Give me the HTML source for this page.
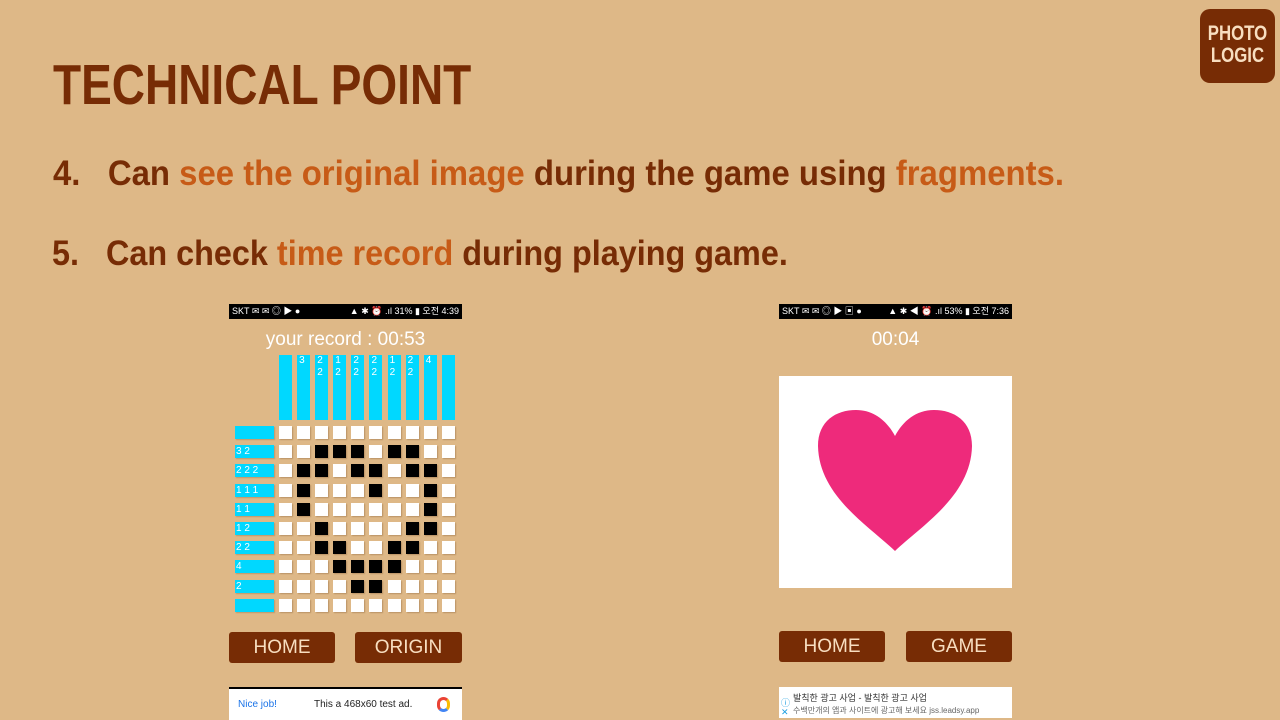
<!DOCTYPE html>
<html><head><meta charset="utf-8"><style>
*{margin:0;padding:0;box-sizing:border-box}
body{width:1280px;height:720px;background:#DEB887;position:relative;overflow:hidden;font-family:"Liberation Sans","Noto Sans CJK KR",sans-serif}
.abs{position:absolute}
.t{color:#772C05;font-weight:bold;white-space:nowrap;transform-origin:0 0}
.o{color:#C75B17}
.sb{background:#000;color:#fff;font-size:9px;height:15px;line-height:15px;padding:0 3px;display:flex;justify-content:space-between}
.btn{background:#772C05;color:#F8DEC0;font-size:19px;text-align:center;line-height:31px;height:31px;border-radius:3px}
.cell{width:13px;height:13px;background:#fff;box-shadow:1px 1px 1px rgba(120,80,40,.35)}
.cell.b{background:#000}
.grid{display:grid;grid-template-columns:repeat(10,13px);column-gap:5.1px;row-gap:6.2px}
.cb{width:13px;height:65px;background:#00D8FF;color:#fff;font-size:10px;line-height:12px;padding-left:2px}
.rc{width:39px;height:13px;background:#00D8FF;color:#fff;font-size:10px;line-height:13px;padding-left:1px;box-shadow:1px 1px 1px rgba(120,80,40,.3)}
</style></head><body>
<div class="abs" style="left:1200px;top:9px;width:75px;height:74px;background:#772C05;border-radius:10px;color:#F8DEC0;font-weight:bold;font-size:21px;line-height:22px;text-align:center;padding-top:14px"><div style="transform:scaleX(.8)">PHOTO<br>LOGIC</div></div>
<div class="abs t" style="left:53px;top:52px;font-size:57px;transform:scaleX(.807)">TECHNICAL POINT</div>
<div class="abs t" style="left:53px;top:154px;font-size:35px;transform:scaleX(.94)">4.&nbsp;&nbsp; Can <span class="o">see the original image</span> during the game using <span class="o">fragments.</span></div>
<div class="abs t" style="left:52px;top:234px;font-size:35px;transform:scaleX(.925)">5.&nbsp;&nbsp; Can check <span class="o">time record</span> during playing game.</div>

<div class="abs sb" style="left:229px;top:304px;width:233px"><span>SKT ✉ ✉ ◎ ▶ ●</span><span>▲ ✱ ⏰ .ıl 31% ▮ 오전 4:39</span></div>
<div class="abs" style="left:229px;top:329px;width:233px;text-align:center;color:#fff;font-size:19px">your record : 00:53</div>
<div class="abs" style="left:279px;top:355px;display:flex;gap:5.1px">
<div class="cb"></div><div class="cb">3</div><div class="cb">2<br>2</div><div class="cb">1<br>2</div><div class="cb">2<br>2</div><div class="cb">2<br>2</div><div class="cb">1<br>2</div><div class="cb">2<br>2</div><div class="cb">4</div><div class="cb"></div>
</div>
<div class="abs" style="left:235px;top:426px;display:flex;flex-direction:column;gap:6.2px">
<div class="rc"></div><div class="rc">3 2</div><div class="rc">2 2 2</div><div class="rc">1 1 1</div><div class="rc">1 1</div><div class="rc">1 2</div><div class="rc">2 2</div><div class="rc">4</div><div class="rc">2</div><div class="rc"></div>
</div>
<div class="abs grid" style="left:279px;top:426px">
<div class="cell"></div><div class="cell"></div><div class="cell"></div><div class="cell"></div><div class="cell"></div><div class="cell"></div><div class="cell"></div><div class="cell"></div><div class="cell"></div><div class="cell"></div>
<div class="cell"></div><div class="cell"></div><div class="cell b"></div><div class="cell b"></div><div class="cell b"></div><div class="cell"></div><div class="cell b"></div><div class="cell b"></div><div class="cell"></div><div class="cell"></div>
<div class="cell"></div><div class="cell b"></div><div class="cell b"></div><div class="cell"></div><div class="cell b"></div><div class="cell b"></div><div class="cell"></div><div class="cell b"></div><div class="cell b"></div><div class="cell"></div>
<div class="cell"></div><div class="cell b"></div><div class="cell"></div><div class="cell"></div><div class="cell"></div><div class="cell b"></div><div class="cell"></div><div class="cell"></div><div class="cell b"></div><div class="cell"></div>
<div class="cell"></div><div class="cell b"></div><div class="cell"></div><div class="cell"></div><div class="cell"></div><div class="cell"></div><div class="cell"></div><div class="cell"></div><div class="cell b"></div><div class="cell"></div>
<div class="cell"></div><div class="cell"></div><div class="cell b"></div><div class="cell"></div><div class="cell"></div><div class="cell"></div><div class="cell"></div><div class="cell b"></div><div class="cell b"></div><div class="cell"></div>
<div class="cell"></div><div class="cell"></div><div class="cell b"></div><div class="cell b"></div><div class="cell"></div><div class="cell"></div><div class="cell b"></div><div class="cell b"></div><div class="cell"></div><div class="cell"></div>
<div class="cell"></div><div class="cell"></div><div class="cell"></div><div class="cell b"></div><div class="cell b"></div><div class="cell b"></div><div class="cell b"></div><div class="cell"></div><div class="cell"></div><div class="cell"></div>
<div class="cell"></div><div class="cell"></div><div class="cell"></div><div class="cell"></div><div class="cell b"></div><div class="cell b"></div><div class="cell"></div><div class="cell"></div><div class="cell"></div><div class="cell"></div>
<div class="cell"></div><div class="cell"></div><div class="cell"></div><div class="cell"></div><div class="cell"></div><div class="cell"></div><div class="cell"></div><div class="cell"></div><div class="cell"></div><div class="cell"></div>
</div>
<div class="abs btn" style="left:229px;top:632px;width:106px">HOME</div>
<div class="abs btn" style="left:355px;top:632px;width:107px">ORIGIN</div>
<div class="abs" style="left:229px;top:687px;width:233px;height:33px;background:#fff;border-top:2px solid #000;font-size:10px;line-height:31px">
<span class="abs" style="left:9px;color:#1a73e8">Nice job!</span><span class="abs" style="left:85px;color:#222">This a 468x60 test ad.</span>
<span class="abs" style="left:208px;top:8px;width:13px;height:15px;border:3px solid #ea4335;border-right-color:#fbbc04;border-bottom-color:#4285f4;border-radius:7px"></span></div>

<div class="abs sb" style="left:779px;top:304px;width:233px"><span>SKT ✉ ✉ ◎ ▶ ▣ ●</span><span>▲ ✱ ◀ ⏰ .ıl 53% ▮ 오전 7:36</span></div>
<div class="abs" style="left:779px;top:329px;width:233px;text-align:center;color:#fff;font-size:19px">00:04</div>
<div class="abs" style="left:779px;top:376px;width:233px;height:212px;background:#fff">
<svg width="233" height="212" viewBox="0 0 233 212"><path d="M116 175 C90 150 40 120 39 70 C39 45 57 34 77 34 C95 34 108 45 116 60 C124 45 137 34 155 34 C175 34 193 45 193 70 C192 120 142 150 116 175 Z" fill="#EE2A7B"/></svg></div>
<div class="abs btn" style="left:779px;top:631px;width:106px">HOME</div>
<div class="abs btn" style="left:906px;top:631px;width:106px">GAME</div>
<div class="abs" style="left:779px;top:687px;width:233px;height:31px;background:#fff;font-size:8px;color:#333">
<div class="abs" style="left:14px;top:4px;font-size:9px">발칙한 광고 사업 - 발칙한 광고 사업</div>
<div class="abs" style="left:14px;top:18px;color:#666">수백만개의 앱과 사이트에 광고해 보세요 jss.leadsy.app</div>
<div class="abs" style="left:2px;top:12px;color:#1a9ee0;font-size:9px;line-height:9px">ⓘ<br>✕</div></div>
</body></html>
